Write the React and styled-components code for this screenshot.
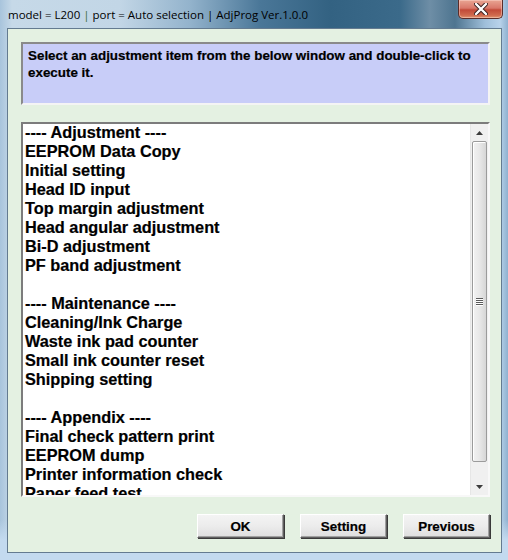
import React from 'react';
import styled, { createGlobalStyle } from 'styled-components';

const GlobalStyle = createGlobalStyle`
  html, body {
    margin: 0;
    padding: 0;
    background: #ffffff;
  }
`;

const items = [
  '---- Adjustment ----',
  'EEPROM Data Copy',
  'Initial setting',
  'Head ID input',
  'Top margin adjustment',
  'Head angular adjustment',
  'Bi-D adjustment',
  'PF band adjustment',
  '',
  '---- Maintenance ----',
  'Cleaning/Ink Charge',
  'Waste ink pad counter',
  'Small ink counter reset',
  'Shipping setting',
  '',
  '---- Appendix ----',
  'Final check pattern print',
  'EEPROM dump',
  'Printer information check',
  'Paper feed test',
];

function App() {
  return (
    <>
      <GlobalStyle />
      <Window>
        <TitleBar>
          <Title>model = L200 <Pipe>|</Pipe> port = Auto selection | AdjProg Ver.1.0.0</Title>
          <CloseButton>
            <svg width="14" height="12" viewBox="0 0 14 12">
              <path d="M2 1 L12 11 M12 1 L2 11" stroke="#3a2020" strokeWidth="4.2" strokeLinecap="round" />
              <path d="M2 1 L12 11 M12 1 L2 11" stroke="#ffffff" strokeWidth="2.4" strokeLinecap="round" />
            </svg>
          </CloseButton>
        </TitleBar>
        <Client>
          <InfoBox>
            Select an adjustment item from the below window and double-click to execute it.
          </InfoBox>
          <ListBox>
            <ListContent>
              {items.map((item, i) => (
                <Item key={i}>{item}</Item>
              ))}
            </ListContent>
            <Scrollbar>
              <ArrowButton>
                <svg width="7" height="4" viewBox="0 0 7 4">
                  <path d="M0 4 L3.5 0 L7 4 Z" fill="#3c3c3c" />
                </svg>
              </ArrowButton>
              <Thumb>
                <Grip>
                  <span />
                  <span />
                  <span />
                  <span />
                </Grip>
              </Thumb>
              <Track />
              <ArrowButton>
                <svg width="7" height="4" viewBox="0 0 7 4">
                  <path d="M0 0 L7 0 L3.5 4 Z" fill="#3c3c3c" />
                </svg>
              </ArrowButton>
            </Scrollbar>
          </ListBox>
          <ButtonRow>
            <Button>OK</Button>
            <Button>Setting</Button>
            <Button>Previous</Button>
          </ButtonRow>
        </Client>
      </Window>
    </>
  );
}

export default App;

const Window = styled.div`
  width: 508px;
  height: 560px;
  display: flex;
  flex-direction: column;
  box-sizing: border-box;
  background:
    linear-gradient(to bottom, rgba(255, 255, 255, 0) 0px, rgba(255, 255, 255, 0) 520px, #c3daef 540px),
    linear-gradient(
      to right,
      #a8c4dc 0px,
      #c6d9e8 12px,
      #c2d6e6 120px,
      #93b3cc 190px,
      #4a7798 260px,
      #336282 330px,
      #3b6a8a 400px,
      #6e8ea6 430px,
      #4e7590 455px,
      #9fbfda 485px,
      #b8d2ea 500px,
      #8fb1cf 508px
    );
`;

const TitleBar = styled.div`
  height: 28px;
  display: flex;
  align-items: flex-start;
  flex-shrink: 0;
`;

const Title = styled.div`
  font-family: 'Open Sans', 'Noto Sans', sans-serif;
  font-size: 11.5px;
  color: #000000;
  padding: 7px 0 0 8px;
  white-space: nowrap;
`;

const Pipe = styled.span`
  color: #3c6a3a;
`;

const CloseButton = styled.div`
  margin-left: auto;
  margin-right: 5px;
  width: 45px;
  height: 19px;
  box-sizing: border-box;
  border: 1px solid #5a2d2a;
  border-top: none;
  border-radius: 0 0 5px 5px;
  background: linear-gradient(to bottom, #e9a593 0%, #d9786a 45%, #c24a38 55%, #d06a4e 85%, #e09670 100%);
  box-shadow: inset 0 0 0 1px rgba(255, 220, 210, 0.45);
  display: flex;
  align-items: center;
  justify-content: center;
`;

const Client = styled.div`
  flex: 1;
  margin: 0 6px 7px 7px;
  background: #e4f1e2;
  border: 1px solid #647b90;
  display: flex;
  flex-direction: column;
  padding: 13px 11px 0 13px;
`;

const InfoBox = styled.div`
  box-sizing: border-box;
  height: 63px;
  background: #c8cdf8;
  border: 2px solid;
  border-color: #8a8a8a #f4f4f4 #f4f4f4 #8a8a8a;
  font-family: 'Liberation Sans', Arial, sans-serif;
  font-weight: bold;
  font-size: 13.4px;
  line-height: 17px;
  color: #000000;
  padding: 3px 4px 0 5px;
  flex-shrink: 0;
  -webkit-text-stroke: 0.2px #000000;
`;

const ListBox = styled.div`
  box-sizing: border-box;
  margin-top: 17px;
  height: 375px;
  background: #ffffff;
  border: 2px solid;
  border-color: #7c7c7c #f8f8f8 #f8f8f8 #7c7c7c;
  display: flex;
  overflow: hidden;
  flex-shrink: 0;
`;

const ListContent = styled.div`
  flex: 1;
  overflow: hidden;
  padding-left: 2px;
`;

const Item = styled.div`
  height: 19px;
  line-height: 16px;
  font-family: 'Liberation Sans', Arial, sans-serif;
  font-weight: bold;
  font-size: 16.3px;
  color: #000000;
  white-space: nowrap;
  -webkit-text-stroke: 0.2px #000000;
`;

const Scrollbar = styled.div`
  width: 17px;
  display: flex;
  flex-direction: column;
  background: #f0f0f0;
  border-left: 1px solid #e6e6e6;
`;

const ArrowButton = styled.div`
  height: 17px;
  display: flex;
  align-items: center;
  justify-content: center;
  flex-shrink: 0;
`;

const Thumb = styled.div`
  height: 321px;
  margin: 0 1px;
  box-sizing: border-box;
  border: 1px solid #9b9b9b;
  border-radius: 2px;
  background: linear-gradient(to right, #f2f2f2 0%, #e8e8e8 50%, #d6d6d6 100%);
  box-shadow: inset 1px 1px 0 #ffffff;
  display: flex;
  align-items: center;
  justify-content: center;
  flex-shrink: 0;
`;

const Grip = styled.div`
  display: flex;
  flex-direction: column;
  gap: 1px;

  span {
    display: block;
    width: 7px;
    height: 1px;
    background: #5a5a5a;
    box-shadow: 0 1px 0 #ffffff;
  }
`;

const Track = styled.div`
  flex: 1;
`;

const ButtonRow = styled.div`
  display: flex;
  justify-content: flex-end;
  gap: 16px;
  margin-top: 17px;
  padding-right: 0;
`;

const Button = styled.div`
  width: 87px;
  height: 24px;
  box-sizing: border-box;
  border: 1px solid;
  border-color: #ffffff #5f5f5f #5f5f5f #ffffff;
  box-shadow: 1px 1px 0 #3a3a3a, inset -1px -1px 0 #a0a0a0;
  background: linear-gradient(to bottom, #f4f4f4 0%, #ececec 50%, #dedede 100%);
  font-family: 'Liberation Sans', Arial, sans-serif;
  font-weight: bold;
  font-size: 13.4px;
  color: #000000;
  display: flex;
  align-items: center;
  justify-content: center;
  -webkit-text-stroke: 0.2px #000000;
`;
